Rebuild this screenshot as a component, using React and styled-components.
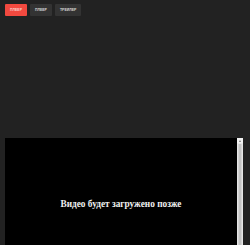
import React from "react";
import styled, { createGlobalStyle } from "styled-components";

const Global = createGlobalStyle`
  html, body { margin: 0; padding: 0; background: #222222; overflow: hidden; }
  body { width: 250px; height: 245px; }
`;

const Page = styled.div`
  display: flex;
  flex-direction: column;
  padding: 4px 7px 0 5px;
  gap: 122px;
`;

const Tabs = styled.div`
  display: flex;
  gap: 3px;
`;

const Tab = styled.div`
  height: 12px;
  padding: 0 5px;
  display: flex;
  align-items: center;
  background: ${(p) => (p.$active ? "#f2493f" : "#333333")};
  color: ${(p) => (p.$active ? "#f8d0cc" : "#d6d6d6")};
  font-family: "Liberation Sans", Arial, sans-serif;
  font-weight: bold;
  font-size: 3.5px;
  border-radius: 1px;
`;

const Frame = styled.div`
  display: flex;
  height: 150px;
`;

const Screen = styled.div`
  flex: 1;
  background: #000;
  display: flex;
  justify-content: center;
  padding-top: 61px;
  color: #f0f0f0;
  font-family: "Liberation Serif", "Times New Roman", serif;
  font-weight: bold;
  font-size: 9.3px;
`;

const Scroll = styled.div`
  width: 6px;
  background: #e6e6e6;
  display: flex;
  flex-direction: column;
  align-items: center;
`;

const Arrow = styled.div`
  width: 6px;
  height: 5px;
  background: #f1f1f1;
  display: flex;
  align-items: center;
  justify-content: center;
  &::after {
    content: "";
    border-left: 1.5px solid transparent;
    border-right: 1.5px solid transparent;
    border-bottom: 2px solid #707070;
  }
`;

const Thumb = styled.div`
  margin-top: 1px;
  width: 4px;
  flex: 1;
  background: #c4c4c4;
  border-left: 1px solid #d4d4d4;
  border-right: 1px solid #d4d4d4;
  box-sizing: border-box;
`;

export default function App() {
  return (
    <>
      <Global />
      <Page>
        <Tabs>
          <Tab $active>ПЛЕЕР</Tab>
          <Tab>ПЛЕЕР</Tab>
          <Tab>ТРЕЙЛЕР</Tab>
        </Tabs>
        <Frame>
          <Screen>Видео будет загружено позже</Screen>
          <Scroll>
            <Arrow />
            <Thumb />
          </Scroll>
        </Frame>
      </Page>
    </>
  );
}
